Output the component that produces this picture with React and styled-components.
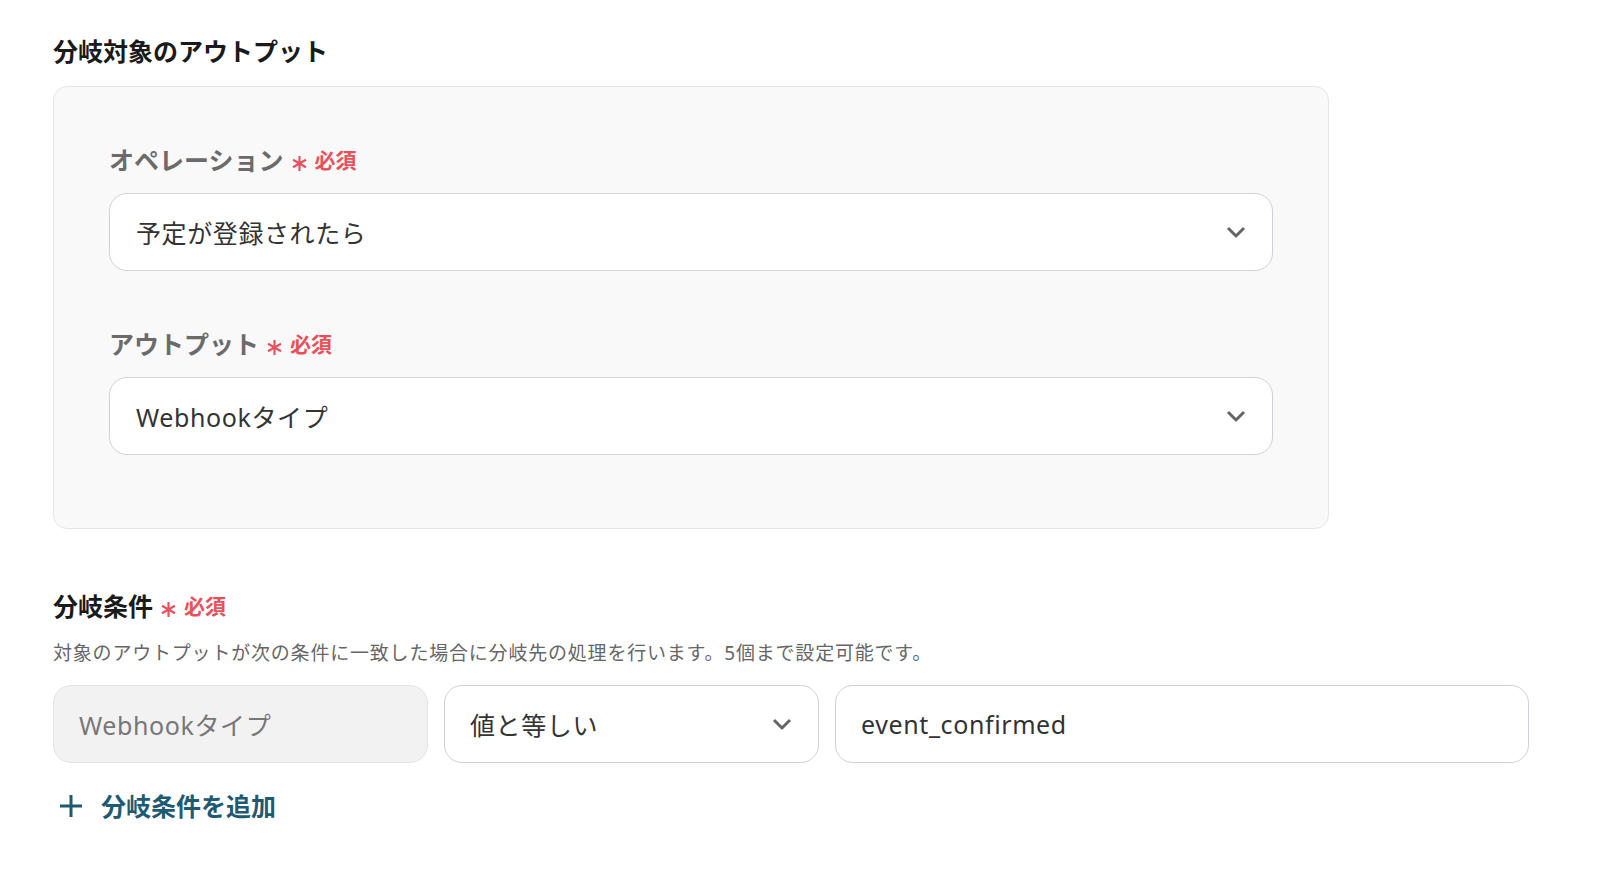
import styled, { createGlobalStyle } from "styled-components"

const Global = createGlobalStyle`
  body {
    margin: 0;
    background: #fff;
    font-family: "Noto Sans", "Noto Sans CJK JP", sans-serif;
    color: #333;
  }
`

const Chevron = () => (
  <svg width="20" height="12" viewBox="0 0 20 12" fill="none">
    <path d="M2 2l8 8 8-8" stroke="#666" strokeWidth="3" strokeLinejoin="round" />
  </svg>
)

const Plus = () => (
  <svg width="24" height="24" viewBox="0 0 24 24" fill="none">
    <path d="M12 1v22M1 12h22" stroke="#1e5a72" strokeWidth="3" />
  </svg>
)

const Asterisk = () => (
  <svg width="17" height="17" viewBox="0 0 16 16" fill="none">
    <path d="M8 1v14M1.9 4.5l12.2 7M1.9 11.5l12.2-7" stroke="#e8505b" strokeWidth="2" />
  </svg>
)

const Required = () => (
  <Req>
    <StarWrap><Asterisk /></StarWrap>必須
  </Req>
)

const App = () => {
  return (
    <>
      <Global />
      <Page>
        <Title>分岐対象のアウトプット</Title>
        <Panel>
          <Label>オペレーション<Required /></Label>
          <Select>
            <span>予定が登録されたら</span>
            <Chevron />
          </Select>
          <Label second>アウトプット<Required /></Label>
          <Select>
            <span>Webhookタイプ</span>
            <Chevron />
          </Select>
        </Panel>

        <Heading>分岐条件<Required /></Heading>
        <Desc>対象のアウトプットが次の条件に一致した場合に分岐先の処理を行います。5個まで設定可能です。</Desc>
        <Row>
          <Field disabled>Webhookタイプ</Field>
          <Field>
            <span>値と等しい</span>
            <Chevron />
          </Field>
          <Field>event_confirmed</Field>
        </Row>
        <AddBtn>
          <Plus />
          分岐条件を追加
        </AddBtn>
      </Page>
    </>
  )
}

export default App

const Page = styled.div`
  padding: 33px 53px 40px;
`

const Title = styled.h2`
  margin: 0 0 17px;
  font-size: 25px;
  line-height: 36px;
  font-weight: 700;
  color: #1a1a1a;
`

const Panel = styled.div`
  width: 1276px;
  box-sizing: border-box;
  background: #f9f9f9;
  border: 1px solid #e6e6e6;
  border-radius: 14px;
  padding: 55px 55px 73px;
`

const Label = styled.div`
  display: flex;
  align-items: center;
  font-size: 25px;
  line-height: 36px;
  font-weight: 700;
  color: #6b6b6b;
  margin: ${p => (p.second ? "55px 0 15px" : "0 0 15px")};
`

const Req = styled.span`
  display: inline-flex;
  align-items: center;
  margin-left: 7px;
  font-size: 21px;
  font-weight: 700;
  color: #e8505b;
`

const StarWrap = styled.span`
  display: inline-flex;
  margin: 6px 7px 0 0;
`

const Select = styled.div`
  height: 78px;
  box-sizing: border-box;
  background: #fff;
  border: 1.5px solid #cdd2d8;
  border-radius: 18px;
  display: flex;
  align-items: center;
  justify-content: space-between;
  padding: 0 26px 0 26px;
  font-size: 25px;
  letter-spacing: 0.6px;
  color: #333;
`

const Heading = styled.div`
  display: flex;
  align-items: center;
  margin: 59px 0 15px;
  font-size: 25px;
  line-height: 36px;
  font-weight: 700;
  color: #1a1a1a;
`

const Desc = styled.p`
  margin: 0 0 18px;
  font-size: 19px;
  letter-spacing: 0.8px;
  line-height: 28px;
  color: #666;
`

const Row = styled.div`
  display: grid;
  grid-template-columns: 375px 375px 694px;
  gap: 16px;
`

const Field = styled.div`
  height: 78px;
  box-sizing: border-box;
  border-radius: 18px;
  border: 1.5px solid ${p => (p.disabled ? "#e3e3e3" : "#cdd2d8")};
  background: ${p => (p.disabled ? "#f2f2f2" : "#fff")};
  color: ${p => (p.disabled ? "#777" : "#333")};
  display: flex;
  align-items: center;
  justify-content: space-between;
  padding: 0 26px 0 25px;
  font-size: 25px;
  letter-spacing: 0.6px;
`

const AddBtn = styled.div`
  display: flex;
  align-items: center;
  gap: 18px;
  margin: 25px 0 0 6px;
  font-size: 25px;
  line-height: 36px;
  font-weight: 700;
  color: #1e5a72;
`
